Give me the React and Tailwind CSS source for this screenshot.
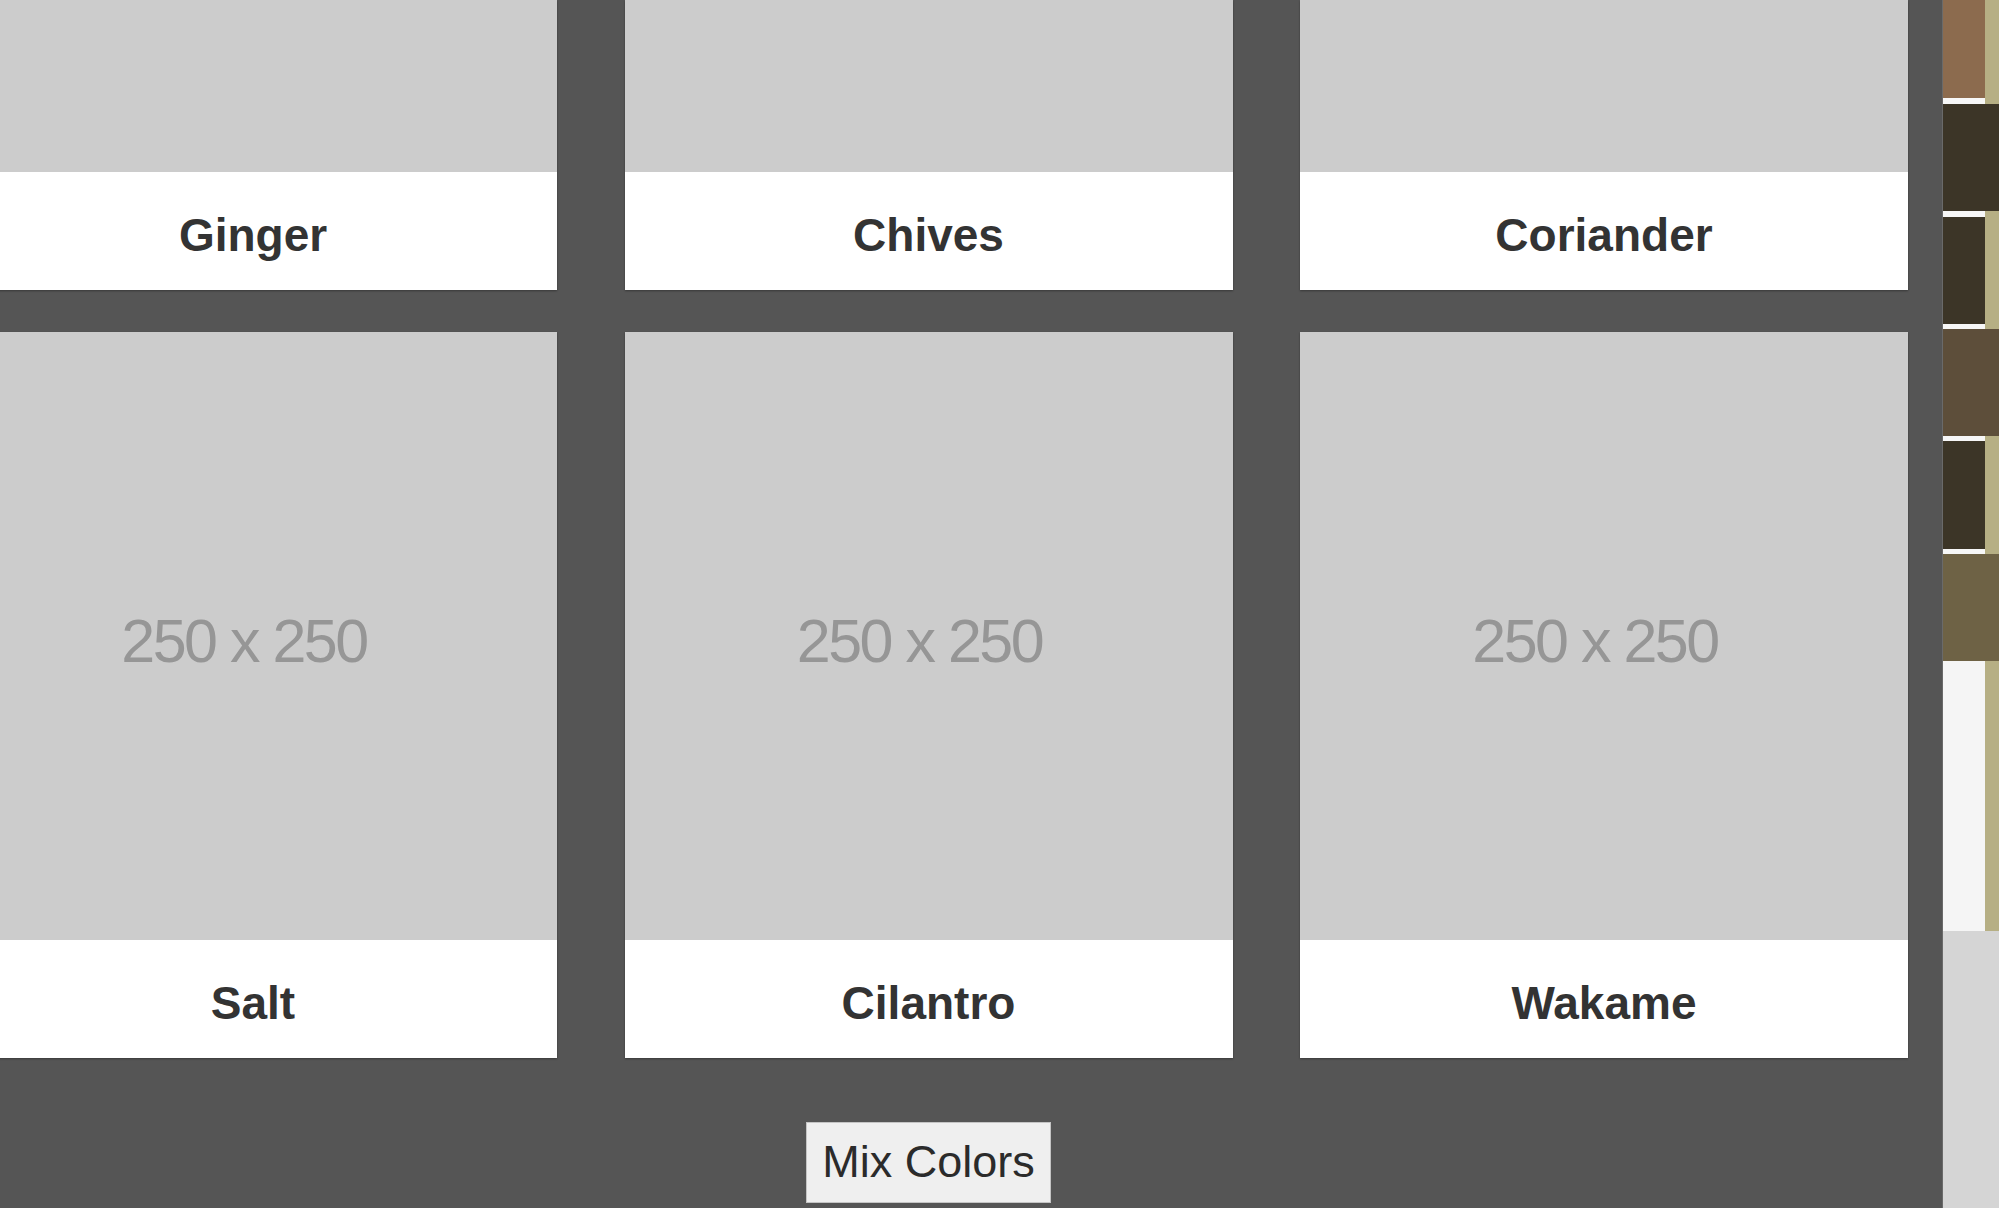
import React from "react";

const rows = [
  { crop: true, items: ["Ginger", "Chives", "Coriander"] },
  { crop: false, items: ["Salt", "Cilantro", "Wakame"] },
];

// sidebar swatches, top to bottom; wide ones cover the olive strip
const swatches = [
  { color: "bg-[#8c6b4e]", h: "h-[98px]", wide: false },
  { gap: "h-[6px]" },
  { color: "bg-[#3c3527]", h: "h-[107px]", wide: true },
  { gap: "h-[6px]" },
  { color: "bg-[#3c3527]", h: "h-[107px]", wide: false },
  { gap: "h-[5px]" },
  { color: "bg-[#5d4e3a]", h: "h-[107px]", wide: true },
  { gap: "h-[5px]" },
  { color: "bg-[#3c3527]", h: "h-[108px]", wide: false },
  { gap: "h-[5px]" },
  { color: "bg-[#6e6245]", h: "h-[107px]", wide: true },
  { color: "bg-[#f5f5f5]", h: "h-[270px]", wide: false },
];

function Card({ name, crop }) {
  return (
    <div className="flex flex-col shadow-[0_1px_2px_rgba(0,0,0,0.35)]">
      {crop ? (
        <div className="h-[172px] bg-[#cccccc]" />
      ) : (
        <div className="flex h-[608px] items-center justify-center bg-[#cccccc] pt-[11px] pr-[18px]">
          <span className="text-[61px] tracking-[-2.5px] text-[#969696] font-['Liberation_Sans',Arial,sans-serif]">
            250 x 250
          </span>
        </div>
      )}
      <div className="flex h-[118px] items-center justify-center bg-white pt-[9px]">
        <span className="text-[46px] font-bold text-[#333333] font-['Liberation_Sans',Arial,sans-serif]">
          {name}
        </span>
      </div>
    </div>
  );
}

export default function App() {
  return (
    <div className="flex h-[1208px] w-[1999px] overflow-hidden bg-[#555555] font-['Liberation_Sans',Arial,sans-serif]">
      <main className="min-w-0 flex-1 overflow-hidden">
        <div className="ml-[-85px] w-[2027px] px-[34px]">
          <div className="grid grid-cols-3 gap-x-[67.5px] gap-y-[42px]">
            {rows.map((row) =>
              row.items.map((name) => <Card key={name} name={name} crop={row.crop} />)
            )}
          </div>
          <div className="flex justify-center pt-[64px]">
            <button className="border border-[#c4c4c4] bg-[#efefef] px-[15px] pt-[13px] pb-[14px] text-[45px] leading-[52px] text-[#2b2b2b]">
              Mix Colors
            </button>
          </div>
        </div>
      </main>

      <aside className="flex w-[57px] shrink-0 flex-col border-l border-[#6a6a6a] bg-[#d5d5d5]">
        {swatches.map((s, i) =>
          s.gap ? (
            <div key={i} className={`flex ${s.gap}`}>
              <div className="w-[42px] bg-[#f7f7f7]" />
              <div className="flex-1 bg-[#b6af84]" />
            </div>
          ) : s.wide ? (
            <div key={i} className={`${s.h} ${s.color}`} />
          ) : (
            <div key={i} className={`flex ${s.h}`}>
              <div className={`w-[42px] ${s.color}`} />
              <div className="flex-1 bg-[#b6af84]" />
            </div>
          )
        )}
      </aside>
    </div>
  );
}
